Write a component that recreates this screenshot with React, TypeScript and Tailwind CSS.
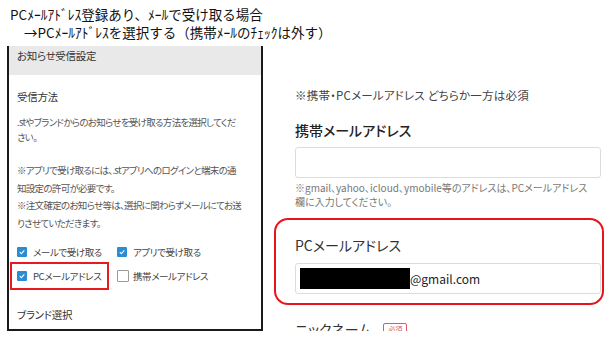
import React from 'react';

const jp = "font-['Noto_Sans_CJK_JP','Noto_Sans',sans-serif] [font-feature-settings:'palt']";

const Check: React.FC<{ checked?: boolean }> = ({ checked }) => (
  <span className="flex w-[16px] shrink-0 items-center">
    {checked ? (
      <span className="flex h-[10px] w-[10px] items-center justify-center rounded-[1px] bg-[#2a8dd4]">
        <svg viewBox="0 0 10 10" className="h-[8px] w-[8px]">
          <path d="M2.2 5.2 L4.2 7.1 L7.9 3" stroke="white" strokeWidth="1.3" fill="none" />
        </svg>
      </span>
    ) : (
      <span className="h-[12px] w-[12px] rounded-[1px] border border-[#9a9a9a] bg-white" />
    )}
  </span>
);

const Option: React.FC<{ checked?: boolean; label: string }> = ({ checked, label }) => (
  <span className="flex h-[16px] items-center whitespace-nowrap text-[9.5px] tracking-[-0.4px] text-[#444]">
    <Check checked={checked} />
    {label}
  </span>
);

const NoticePanel = () => (
  <div className="ml-[7px] h-[285px] w-[256px] shrink-0 overflow-hidden border-x-2 border-b-2 border-[#1a1a1a] bg-white">
    <div className="h-[29px] bg-[#e9e9e9] pl-[8px] pt-[2px] text-[10.5px] leading-[16px] tracking-[-0.3px] text-[#333]">
      お知らせ受信設定
    </div>
    <div className="px-[8px]">
      <p className="mt-[14px] text-[10.5px] leading-[16px] tracking-[-0.3px] text-[#333]">受信方法</p>
      <p className="mt-[10px] whitespace-nowrap text-[9.5px] leading-[15px] tracking-[-0.7px] text-[#555]">
        .stやブランドからのお知らせを受け取る方法を選択してくだ
        <br />
        さい。
      </p>
      <p className="mt-[17px] whitespace-nowrap text-[9.5px] leading-[17.5px] tracking-[-0.7px] text-[#555]">
        ※アプリで受け取るには、.stアプリへのログインと端末の通
        <br />
        知設定の許可が必要です。
        <br />
        ※注文確定のお知らせ等は、選択に関わらずメールにてお送
        <br />
        りさせていただきます。
      </p>
      <div className="mt-[12px] grid grid-cols-[100px_auto]">
        <Option checked label="メールで受け取る" />
        <Option checked label="アプリで受け取る" />
      </div>
      <div className="mt-[2px] grid grid-cols-[100px_auto] items-center">
        <div className="-ml-[7px] flex h-[28px] w-[99px] items-center border-2 border-[#e8191f] pl-[5px]">
          <Option checked label="PCメールアドレス" />
        </div>
        <Option label="携帯メールアドレス" />
      </div>
      <p className="mt-[17px] text-[10.5px] leading-[16px] tracking-[-0.3px] text-[#333]">ブランド選択</p>
    </div>
  </div>
);

const AddressForm = () => (
  <div className="ml-[11px] h-[285px] w-[330px] shrink-0 overflow-hidden bg-white">
    <div className="border-2 border-transparent pl-[19px] pr-[1px] pt-[39px]">
      <p className="text-[11.5px] leading-[16px] tracking-[0.2px] text-[#444]">※携帯・PCメールアドレス どちらか一方は必須</p>
      <p className="mt-[17px] text-[14px] font-medium leading-[20px] text-[#222]">携帯メールアドレス</p>
      <div className="mt-[7px] h-[31px] rounded-[3px] border border-[#dcdcdc] bg-white" />
      <p className="mt-[3px] text-[10px] leading-[14px] text-[#777]">
        ※gmail、yahoo、icloud、ymobile等のアドレスは、PCメールアドレス
        <br />
        欄に入力してください。
      </p>
    </div>
    <div className="mt-[7px] rounded-[14px] border-2 border-[#e8131b] pb-[9px] pl-[19px] pr-[1px] pt-[15px]">
      <p className="text-[14px] leading-[20px] text-[#333]">PCメールアドレス</p>
      <div className="mt-[8px] flex h-[31px] items-center rounded-[3px] border border-[#dcdcdc] bg-white pl-[4px]">
        <span className="h-[21px] w-[110px] bg-black" />
        <span className="text-[12px] text-[#222]">@gmail.com</span>
      </div>
    </div>
    <div className="flex items-center border-2 border-transparent pl-[19px] pt-[12px]">
      <span className="text-[14px] leading-[20px] text-[#333]">ニックネーム</span>
      <span className="ml-[12px] rounded-[2px] border border-[#e0566b] px-[4px] text-[7px] leading-[10px] text-[#e0566b]">
        必須
      </span>
    </div>
  </div>
);

export default function App() {
  return (
    <div className={`h-[341px] w-[615px] overflow-hidden bg-white ${jp}`}>
      <div className="pl-[10px] pt-[5px] text-[13.5px] leading-[18px] text-[#111] [font-feature-settings:normal]">
        <p>PCﾒｰﾙｱﾄﾞﾚｽ登録あり、ﾒｰﾙで受け取る場合</p>
        <p className="pl-[14px]">→PCﾒｰﾙｱﾄﾞﾚｽを選択する（携帯ﾒｰﾙのﾁｪｯｸは外す）</p>
      </div>
      <div className="mt-[5px] flex">
        <NoticePanel />
        <AddressForm />
      </div>
    </div>
  );
}
